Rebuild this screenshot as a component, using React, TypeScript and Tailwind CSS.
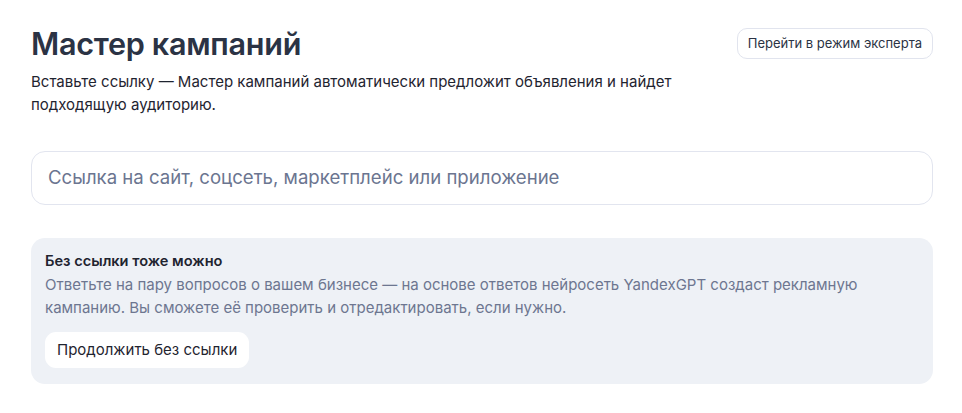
import React from "react";

export default function App() {
  return (
    <main className="min-h-screen w-[962px] bg-white font-['Inter',sans-serif] text-[#1f2430]">
      <div className="pl-[31px] pr-[29px] pt-[24px] pb-[30px]">
        <div className="flex items-start justify-between">
          <h1 className="text-[30.6px] leading-[40px] font-semibold tracking-[-0.3px] text-[#2b3344]">
            Мастер кампаний
          </h1>
          <button className="mt-[4px] h-[31px] rounded-[10px] border border-[#e1e4ee] bg-white px-[10px] text-[13px] text-[#2b3344]">
            Перейти в режим эксперта
          </button>
        </div>

        <p className="mt-[6px] max-w-[660px] text-[15px] leading-[23px] text-[#1f2430]">
          Вставьте ссылку — Мастер кампаний автоматически предложит объявления и найдет подходящую аудиторию.
        </p>

        <div className="mt-[35px] flex h-[54px] items-center rounded-[14px] border border-[#e2e5ef] bg-white px-[16px]">
          <input
            className="w-full bg-transparent text-[18.6px] text-[#1f2430] outline-none placeholder:text-[#6b7590]"
            placeholder="Ссылка на сайт, соцсеть, маркетплейс или приложение"
          />
        </div>

        <div className="mt-[33px] rounded-[14px] bg-[#eef1f6] px-[14px] pt-[13px] pb-[16px]">
          <p className="text-[14.6px] leading-[20px] font-semibold text-[#1f2430]">
            Без ссылки тоже можно
          </p>
          <p className="mt-[2px] max-w-[860px] text-[15px] leading-[23px] text-[#6d7690]">
            Ответьте на пару вопросов о вашем бизнесе — на основе ответов нейросеть YandexGPT создаст рекламную кампанию. Вы сможете её проверить и отредактировать, если нужно.
          </p>
          <button className="mt-[13px] h-[36px] rounded-[11px] bg-white px-[12px] text-[15px] text-[#1f2430]">
            Продолжить без ссылки
          </button>
        </div>
      </div>
    </main>
  );
}
